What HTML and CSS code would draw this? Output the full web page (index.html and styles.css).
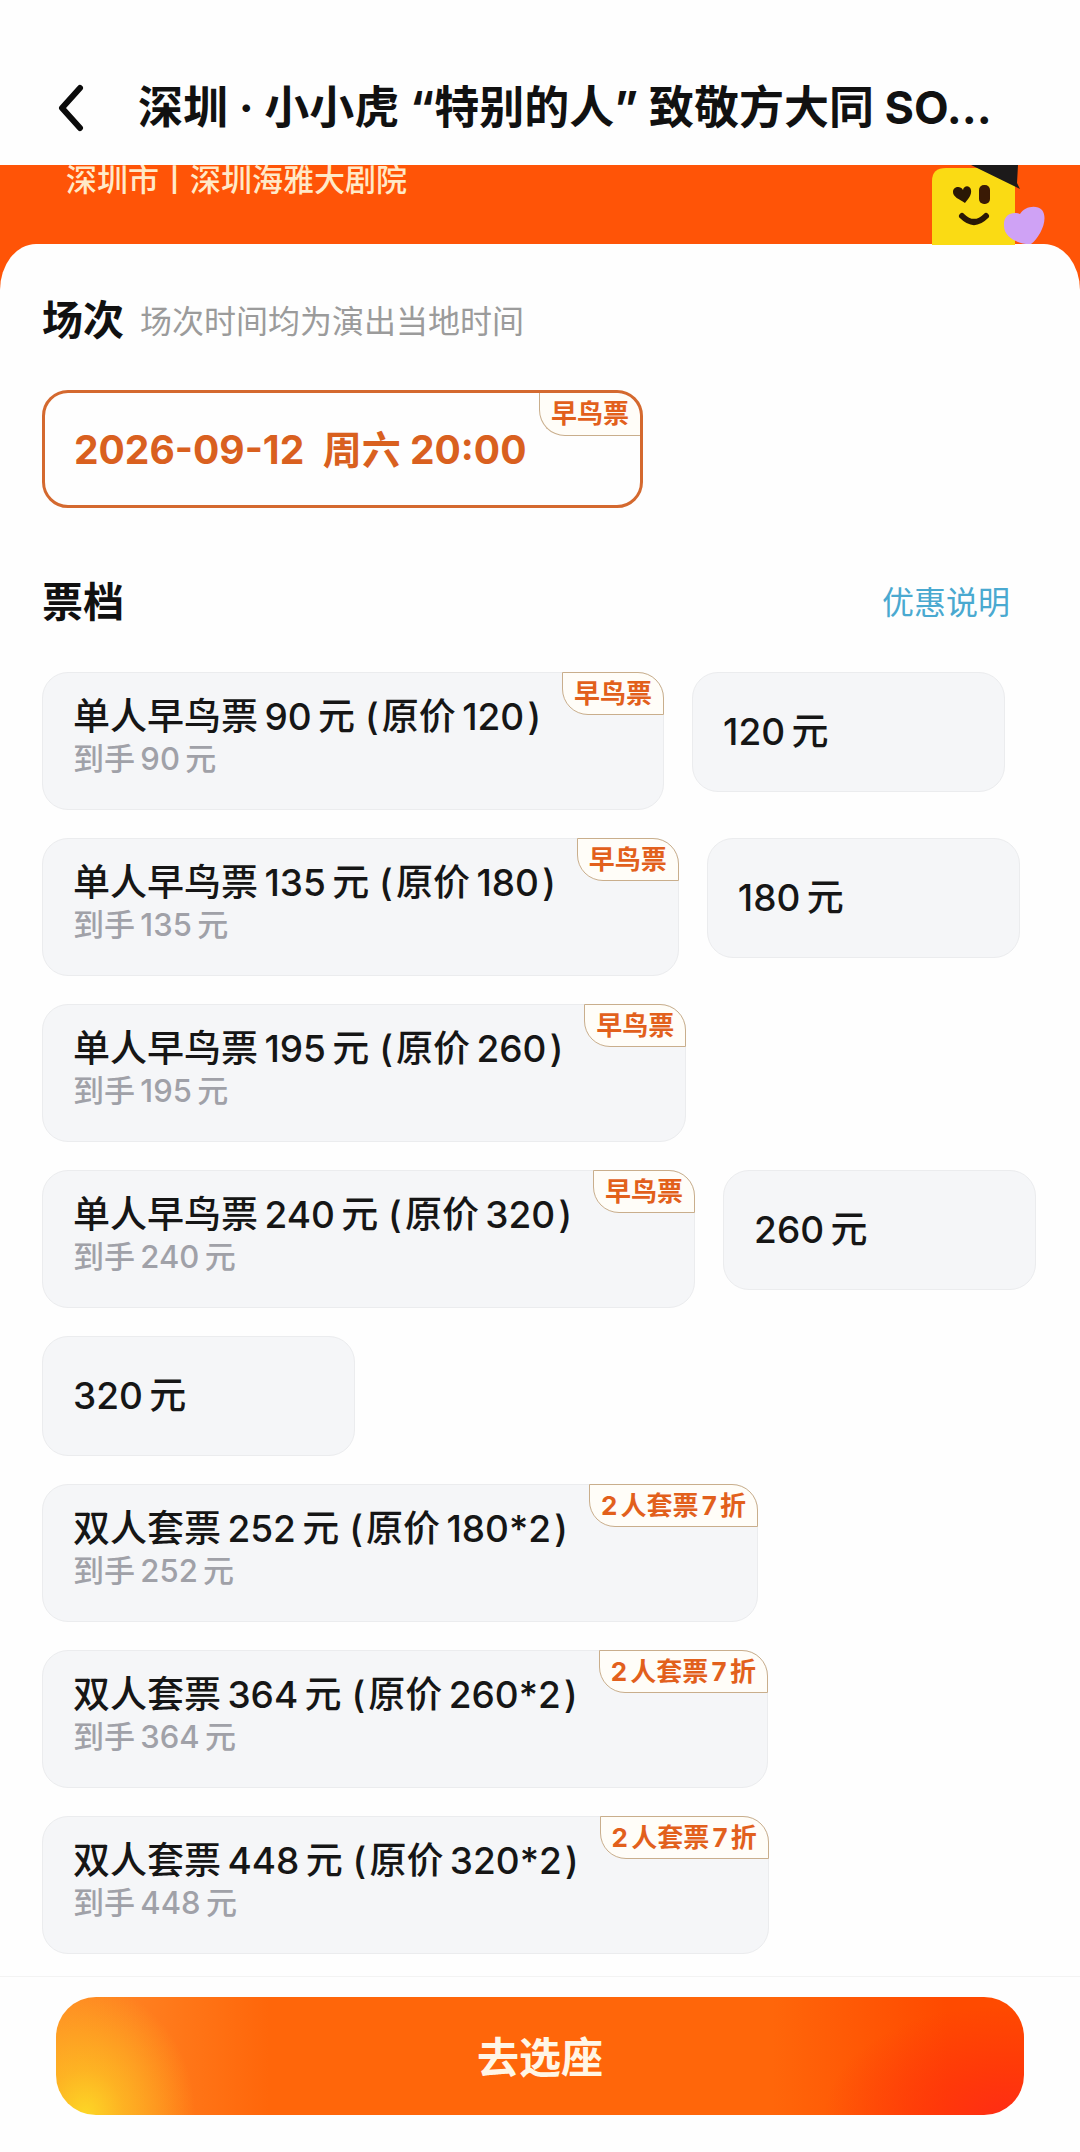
FILE: index.html
```html
<!doctype html>
<html lang="zh-CN">
<head>
    <meta charset="utf-8">
    <meta name="viewport" content="width=device-width, initial-scale=1.0">
    <title>选择票档</title>
    <link rel="stylesheet" href="styles.css">
</head>
<body>
    <header class="topbar">
        <button class="back-btn" type="button" aria-label="返回">
            <svg width="26" height="48" viewBox="0 0 26 48" fill="none" stroke="#0b0b0b" stroke-width="6" stroke-linecap="round" stroke-linejoin="round">
                <path d="M22 4 L4 24 L22 44"/>
            </svg>
        </button>
        <h1>深圳 · 小小虎 “特别的人” 致敬方大同 SO...</h1>
    </header>

    <div class="banner">
        <p>深圳市丨深圳海雅大剧院</p>
        <svg class="mascot" width="114" height="80" viewBox="0 0 114 80" aria-hidden="true">
            <path d="M0 80 V16 Q0 3 14 3 H72 Q83 6 83 20 V80 Z" fill="#fadb14"/>
            <path d="M39 0 H86 L85 18 L88 24 Z" fill="#1c1a1a"/>
            <path d="M33 38 C27 34 21 32 21 27 C21 22 28 20 31 25 C32 20 38 20 39 25 C40 30 36 34 33 38 Z" fill="#2a1805"/>
            <rect x="47" y="20" width="11" height="19" rx="5" fill="#3a1a05"/>
            <path d="M30 51 Q42 63 54 51" fill="none" stroke="#2a1805" stroke-width="6" stroke-linecap="round"/>
            <path d="M99 79 C90 80 72 74 72 61 C71 50 80 46 88 49 C92 42 104 39 110 45 C117 54 108 72 99 79 Z" fill="#cfa2f5"/>
        </svg>
    </div>

    <main class="panel">
        <div class="section-header">
            <h2>场次</h2>
            <span class="hint">场次时间均为演出当地时间</span>
        </div>
        <button class="session" type="button">
            <span class="session-time">2026-09-12&nbsp; 周六 20:00</span>
            <span class="tag">早鸟票</span>
        </button>

        <div class="section-header ticket-header">
            <h2>票档</h2>
            <a class="discount-link" href="#">优惠说明</a>
        </div>
        <div class="tickets">
            <button class="ticket" type="button">
                <span class="info"><span class="name">单人早鸟票&thinsp;90&thinsp;元 (&hairsp;原价&thinsp;120&hairsp;)</span><span class="final">到手&thinsp;90&thinsp;元</span></span>
                <span class="tag">早鸟票</span>
            </button>
            <button class="ticket simple" type="button"><span class="name">120&thinsp;元</span></button>
            <button class="ticket" type="button">
                <span class="info"><span class="name">单人早鸟票&thinsp;135&thinsp;元 (&hairsp;原价&thinsp;180&hairsp;)</span><span class="final">到手&thinsp;135&thinsp;元</span></span>
                <span class="tag">早鸟票</span>
            </button>
            <button class="ticket simple" type="button"><span class="name">180&thinsp;元</span></button>
            <button class="ticket" type="button">
                <span class="info"><span class="name">单人早鸟票&thinsp;195&thinsp;元 (&hairsp;原价&thinsp;260&hairsp;)</span><span class="final">到手&thinsp;195&thinsp;元</span></span>
                <span class="tag">早鸟票</span>
            </button>
            <button class="ticket" type="button">
                <span class="info"><span class="name">单人早鸟票&thinsp;240&thinsp;元 (&hairsp;原价&thinsp;320&hairsp;)</span><span class="final">到手&thinsp;240&thinsp;元</span></span>
                <span class="tag">早鸟票</span>
            </button>
            <button class="ticket simple" type="button"><span class="name">260&thinsp;元</span></button>
            <button class="ticket simple" type="button"><span class="name">320&thinsp;元</span></button>
            <button class="ticket" type="button">
                <span class="info"><span class="name">双人套票&thinsp;252&thinsp;元 (&hairsp;原价&thinsp;180*2&hairsp;)</span><span class="final">到手&thinsp;252&thinsp;元</span></span>
                <span class="tag">2人套票7折</span>
            </button>
            <button class="ticket" type="button">
                <span class="info"><span class="name">双人套票&thinsp;364&thinsp;元 (&hairsp;原价&thinsp;260*2&hairsp;)</span><span class="final">到手&thinsp;364&thinsp;元</span></span>
                <span class="tag">2人套票7折</span>
            </button>
            <button class="ticket" type="button">
                <span class="info"><span class="name">双人套票&thinsp;448&thinsp;元 (&hairsp;原价&thinsp;320*2&hairsp;)</span><span class="final">到手&thinsp;448&thinsp;元</span></span>
                <span class="tag">2人套票7折</span>
            </button>
        </div>
    </main>

    <footer class="bottom-bar">
        <button class="seat-btn" type="button">去选座</button>
    </footer>
</body>
</html>
```
FILE: styles.css
```css
* {
    box-sizing: border-box;
}

body {
    margin: 0;
    font-family: Inter, "Noto Sans CJK SC", sans-serif;
    text-autospace: normal;
    color: #111;
    background-color: #fefefe;
}

h1, h2, p {
    margin: 0;
}

button {
    font-family: inherit;
    color: inherit;
    text-align: left;
    border: none;
    padding: 0;
    cursor: pointer;
}

/* Top bar */
.topbar {
    display: flex;
    align-items: center;
    gap: 54px;
    height: 165px;
    padding: 50px 58px 0;
    background-color: #fefefe;
}

.back-btn {
    display: flex;
    background: none;
}

.topbar h1 {
    font-size: 45px;
    line-height: 60px;
    font-weight: 700;
    white-space: nowrap;
}

/* Orange banner, scrolled under the top bar */
.banner {
    display: flex;
    justify-content: space-between;
    align-items: flex-start;
    height: 129px;
    padding: 0 34px 0 66px;
    overflow: hidden;
    color: #ffe9c8;
    background-color: #ff5407;
}

.banner p {
    font-size: 31px;
    line-height: 30px;
    font-weight: 500;
}

/* White panel */
.panel {
    margin-top: -50px;
    padding: 46px 42px 22px;
    border-radius: 36px 36px 0 0 / 46px 46px 0 0;
    background-color: #fefefe;
}

.section-header {
    display: flex;
    align-items: center;
    gap: 16px;
    height: 60px;
}

.section-header h2 {
    font-size: 41px;
    line-height: 60px;
    font-weight: 700;
}

.hint {
    padding-bottom: 3px;
    font-size: 32px;
    color: #9b9b9b;
}

.session {
    display: flex;
    justify-content: space-between;
    align-items: center;
    width: 601px;
    max-width: 100%;
    height: 118px;
    margin-top: 40px;
    padding-left: 29px;
    border: 3px solid #d4692f;
    border-radius: 26px;
    background-color: #fefefe;
    overflow: hidden;
}

.session-time {
    padding-bottom: 4px;
    font-size: 39px;
    font-weight: 700;
    color: #d9601f;
}

.ticket-header {
    justify-content: space-between;
    margin-top: 64px;
    padding-right: 28px;
}

.discount-link {
    padding-bottom: 4px;
    font-size: 32px;
    color: #4aa9d0;
    text-decoration: none;
}

/* Ticket list */
.tickets {
    display: flex;
    flex-wrap: wrap;
    align-items: flex-start;
    gap: 28px;
    margin-top: 40px;
}

.ticket {
    display: flex;
    align-items: flex-start;
    gap: 21px;
    min-height: 120px;
    padding-left: 30px;
    border: 1px solid #ebecee;
    border-radius: 26px;
    background-color: #f5f6f8;
}

.ticket.simple {
    align-items: center;
    width: 313px;
}

.info {
    display: flex;
    flex-direction: column;
    padding: 22px 0 30px;
}

.name {
    font-size: 37px;
    line-height: 44px;
    font-weight: 500;
    font-feature-settings: "calt" 0;
    color: #161616;
    white-space: nowrap;
}

.final {
    font-size: 31px;
    line-height: 40px;
    font-weight: 500;
    color: #a0a1a8;
}

.tag {
    align-self: flex-start;
    height: 43px;
    padding: 0 11px;
    border: 1px solid #c9ae8c;
    border-radius: 0 26px 0 26px;
    font-size: 26px;
    line-height: 41px;
    font-weight: 700;
    color: #e2601c;
    background-color: #fffdf8;
    white-space: nowrap;
}

.ticket .tag {
    margin: -1px -1px 0 0;
}

.session .tag {
    border-width: 0 0 1px 1px;
}

/* Bottom bar */
.bottom-bar {
    padding: 20px 56px 37px;
    border-top: 1px solid #f3f3f3;
}

.seat-btn {
    display: block;
    width: 100%;
    height: 118px;
    padding-bottom: 4px;
    border-radius: 40px;
    font-size: 42px;
    font-weight: 700;
    text-align: center;
    color: #fff6e6;
    background:
        radial-gradient(ellipse 110px 130px at 3% 100%, #fdd726 0, rgba(253, 190, 35, 0.8) 35%, rgba(255, 120, 20, 0) 100%),
        radial-gradient(ellipse 180px 110px at 98% 100%, #ff2d14 0, rgba(255, 45, 15, 0.6) 40%, rgba(255, 80, 10, 0) 100%),
        linear-gradient(90deg, #ff8a24 0, #ff8020 8%, #ff660a 22%, #ff660a 74%, #ff4a00 92%);
}
```
